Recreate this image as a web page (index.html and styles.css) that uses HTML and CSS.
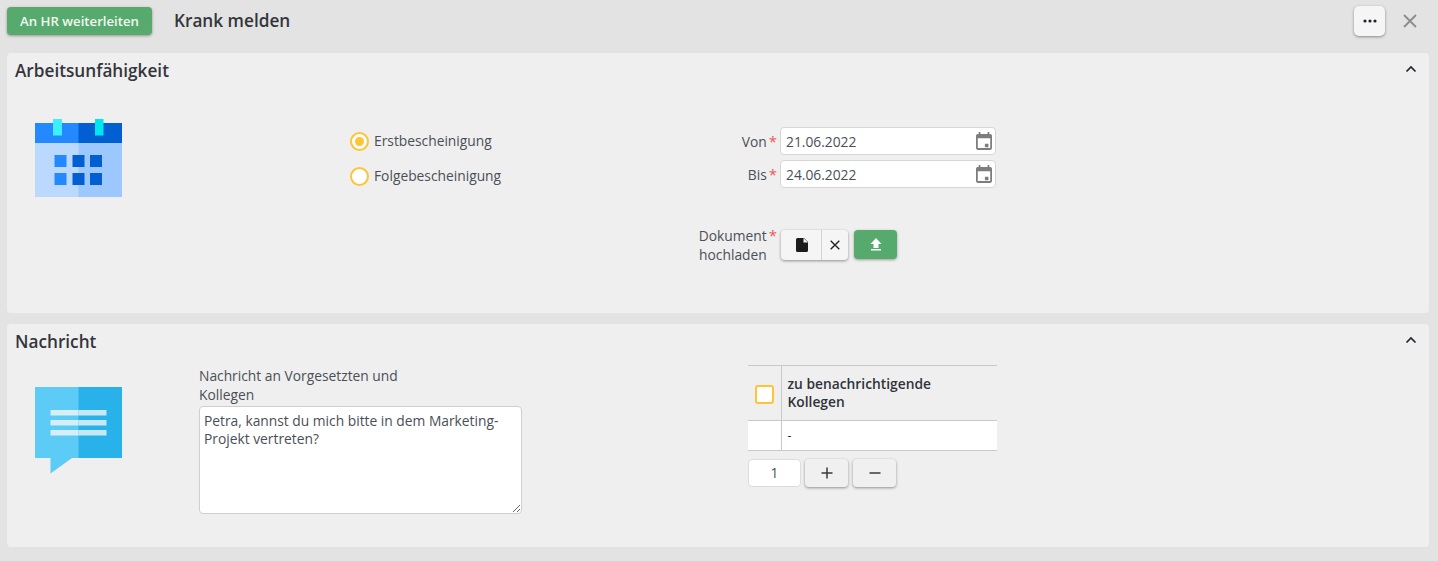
FILE: index.html
```html
<!DOCTYPE html>
<html lang="de">
<head>
<meta charset="utf-8">
<title>Krank melden</title>
<link rel="stylesheet" href="styles.css">
</head>
<body>
<header class="topbar">
  <button class="btn-green btn-forward">An HR weiterleiten</button>
  <h1 class="page-title">Krank melden</h1>
  <button class="btn-more" aria-label="Mehr">
    <svg width="14" height="4" viewBox="0 0 14 4"><circle cx="2" cy="2" r="1.6"/><circle cx="7" cy="2" r="1.6"/><circle cx="12" cy="2" r="1.6"/></svg>
  </button>
  <button class="btn-close" aria-label="Schließen">
    <svg width="14" height="14" viewBox="0 0 14 14"><path d="M1 1l12 12M13 1L1 13"/></svg>
  </button>
</header>

<section class="panel panel-work">
  <div class="panel-head">
    <h2>Arbeitsunfähigkeit</h2>
    <svg class="chevron" width="12" height="8" viewBox="0 0 12 8"><path d="M1.500 6.500L6 2l4.500 4.500"/></svg>
  </div>
  <div class="work-body">
    <svg class="big-icon" width="87" height="78" viewBox="0 0 87 78">
      <rect x="0" y="4" width="44" height="20" fill="#2488ff"/>
      <rect x="43.500" y="4" width="43.500" height="20" fill="#025fd1"/>
      <rect x="0" y="24" width="44" height="54" fill="#bbd9ff"/>
      <rect x="43.500" y="24" width="43.500" height="54" fill="#9cc7ff"/>
      <rect x="18" y="0" width="9" height="16.500" fill="#3ef0ff"/>
      <rect x="60" y="0" width="8.500" height="16.500" fill="#00e7f0"/>
      <rect x="19.500" y="36" width="12" height="12" fill="#2488ff"/>
      <rect x="37.500" y="36" width="12" height="12" fill="#025fd1"/>
      <rect x="55" y="36" width="12" height="12" fill="#025fd1"/>
      <rect x="19.500" y="54" width="12" height="12" fill="#2488ff"/>
      <rect x="37.500" y="54" width="12" height="12" fill="#025fd1"/>
      <rect x="55" y="54" width="12" height="12" fill="#025fd1"/>
    </svg>
    <div class="radios">
      <label class="radio-row"><span class="radio radio-on"></span>Erstbescheinigung</label>
      <label class="radio-row"><span class="radio"></span>Folgebescheinigung</label>
    </div>
    <div class="fields">
      <div class="field-row">
        <span class="field-label">Von<i class="req">*</i></span>
        <div class="date-input">21.06.2022
          <svg class="cal" width="16" height="18" viewBox="3 2 18 20"><path d="M19 4h-1V2h-2v2H8V2H6v2H5a2 2 0 0 0-2 2v14a2 2 0 0 0 2 2h14a2 2 0 0 0 2-2V6a2 2 0 0 0-2-2zm0 16H5V9h14v11zm-6-5h4v4h-4z"/></svg>
        </div>
      </div>
      <div class="field-row">
        <span class="field-label">Bis<i class="req">*</i></span>
        <div class="date-input">24.06.2022
          <svg class="cal" width="16" height="18" viewBox="3 2 18 20"><path d="M19 4h-1V2h-2v2H8V2H6v2H5a2 2 0 0 0-2 2v14a2 2 0 0 0 2 2h14a2 2 0 0 0 2-2V6a2 2 0 0 0-2-2zm0 16H5V9h14v11zm-6-5h4v4h-4z"/></svg>
        </div>
      </div>
      <div class="upload-row">
        <span class="field-label upload-label">Dokument<i class="req">*</i><br>hochladen<i class="req req-hidden">*</i></span>
        <div class="file-group">
          <button class="file-btn file-pick" aria-label="Datei">
            <svg width="12" height="14" viewBox="0 0 12 14"><path d="M1.500 0H8l4 4v8.500A1.500 1.500 0 0 1 10.500 14h-9A1.500 1.500 0 0 1 0 12.500v-11A1.500 1.500 0 0 1 1.500 0z" fill="#1c1c1c"/><path d="M7.500 0v4.500H12" fill="#f5f5f5"/></svg>
          </button>
          <button class="file-btn file-clear" aria-label="Entfernen">
            <svg width="10" height="10" viewBox="0 0 10 10"><path d="M.7.7l8.600 8.600M9.300.7L.7 9.300"/></svg>
          </button>
        </div>
        <button class="btn-green btn-upload" aria-label="Hochladen">
          <svg width="12" height="13" viewBox="0 0 12 13"><path d="M6 0l5.500 6H8.500v4h-5V6H.5z" fill="#fff"/><rect x="1" y="11" width="10" height="1.500" fill="#fff"/></svg>
        </button>
      </div>
    </div>
  </div>
</section>

<section class="panel panel-msg">
  <div class="panel-head">
    <h2>Nachricht</h2>
    <svg class="chevron" width="12" height="8" viewBox="0 0 12 8"><path d="M1.500 6.500L6 2l4.500 4.500"/></svg>
  </div>
  <div class="msg-body">
    <svg class="big-icon chat-icon" width="87" height="87" viewBox="0 0 87 87">
      <path d="M0 0h44v71H37L15.500 86.500V71H0z" fill="#5ccbf5"/>
      <rect x="43.500" width="43.500" height="71" fill="#29b2ea"/>
      <rect x="15.500" y="23" width="28" height="5.500" fill="#d5eef8"/>
      <rect x="43.500" y="23" width="28" height="5.500" fill="#c6e7f4"/>
      <rect x="15.500" y="33" width="28" height="5.500" fill="#d5eef8"/>
      <rect x="43.500" y="33" width="28" height="5.500" fill="#c6e7f4"/>
      <rect x="15.500" y="43" width="28" height="5.500" fill="#d5eef8"/>
      <rect x="43.500" y="43" width="28" height="5.500" fill="#c6e7f4"/>
    </svg>
    <div class="msg-col">
      <label class="msg-label">Nachricht an Vorgesetzten und Kollegen</label>
      <textarea class="msg-text">Petra, kannst du mich bitte in dem Marketing-Projekt vertreten?</textarea>
    </div>
    <div class="colleagues">
      <table class="col-table">
        <thead>
          <tr><th class="check-cell"><span class="checkbox"></span></th><th class="name-cell">zu benachrichtigende Kollegen</th></tr>
        </thead>
        <tbody>
          <tr><td class="check-cell"></td><td class="name-cell">-</td></tr>
        </tbody>
      </table>
      <div class="pager">
        <div class="page-input">1</div>
        <button class="page-btn" aria-label="Plus"><svg width="12" height="12" viewBox="0 0 12 12"><path d="M6 .5v11M.5 6h11"/></svg></button>
        <button class="page-btn" aria-label="Minus"><svg width="12" height="12" viewBox="0 0 12 12"><path d="M.5 6h11"/></svg></button>
      </div>
    </div>
  </div>
</section>
</body>
</html>
```
FILE: styles.css
```css
* { box-sizing: border-box; }
html, body { height: 100%; }
body {
  margin: 0;
  padding: 0 9px 0 7px;
  background: #e3e3e3;
  font-family: "Open Sans", sans-serif;
  font-size: 13.800px;
  line-height: 19px;
  color: #4a4f57;
  overflow: hidden;
}
button { font-family: inherit; padding: 0; cursor: pointer; }
.topbar {
  display: flex;
  align-items: center;
  height: 53px;
  padding-bottom: 11px;
}
.btn-green {
  background: #57aa6e;
  color: #f2f7f2;
  border: 0;
  border-radius: 4px;
  box-shadow: 0 1px 3px rgba(0,0,0,.35);
}
.btn-forward {
  width: 145px;
  height: 28px;
  font-size: 13.200px;
  font-weight: 600;
}
.page-title {
  margin: 0 0 2px 22px;
  font-size: 17.200px;
  font-weight: 600;
  color: #33353b;
  flex: 1;
}
.btn-more {
  width: 31px;
  height: 30px;
  background: #f5f5f5;
  border: 0;
  border-radius: 5px;
  box-shadow: 0 1px 3px rgba(0,0,0,.4);
  display: flex;
  align-items: center;
  justify-content: center;
  fill: #1f2530;
}
.btn-close {
  width: 14px;
  height: 14px;
  margin: 0 12px 0 18px;
  background: none;
  border: 0;
  display: flex;
}
.btn-close path { stroke: #8c8c8c; stroke-width: 1.8; fill: none; }
.panel {
  background: #efefef;
  border-radius: 4px;
}
.panel-work { height: 260px; margin-bottom: 11px; }
.panel-msg { height: 223px; }
.panel-head {
  display: flex;
  align-items: center;
  justify-content: space-between;
  height: 35px;
  padding: 0 12px 1px 8px;
}
.panel-head h2 {
  margin: 0;
  font-size: 17.200px;
  font-weight: 600;
  color: #33353b;
}
.chevron { margin-bottom: 3px; }
.chevron path { fill: none; stroke: #1f2530; stroke-width: 1.7; }
.work-body {
  display: flex;
  align-items: flex-start;
  padding: 31px 0 0 28px;
}
.radios {
  width: 390px;
  margin-left: 228px;
  padding-top: 12px;
  display: flex;
  flex-direction: column;
  gap: 16px;
}
.radio-row { display: flex; align-items: center; height: 19px; gap: 5px; }
.radio {
  width: 19px;
  height: 19px;
  margin-top: 1px;
  border-radius: 50%;
  border: 2px solid #fdc536;
  background: #fff;
  position: relative;
}
.radio-on::after {
  content: "";
  position: absolute;
  inset: 3px;
  border-radius: 50%;
  background: #fdc536;
}
.fields {
  margin-top: 8px;
  margin-left: -53px;
  display: flex;
  flex-direction: column;
  gap: 5px;
}
.field-row { display: flex; align-items: center; gap: 3px; }
.field-label { width: 90px; text-align: right; }
.req { color: #f0545a; font-style: normal; font-size: 15px; margin-left: 2px; line-height: 0; }
.req-hidden { visibility: hidden; }
.date-input {
  position: relative;
  width: 216px;
  height: 28px;
  padding-left: 5px;
  display: flex;
  align-items: center;
  justify-content: space-between;
  background: #fff;
  border: 1px solid #d6d6d6;
  border-radius: 4px;
}
.cal { margin-right: 3px; fill: #7d7d7d; }
.upload-row {
  display: flex;
  align-items: flex-start;
  margin-top: 31px;
}
.upload-label { margin-right: 4px; margin-top: 3px; line-height: 18.500px; }
.file-group {
  display: flex;
  height: 30px;
  margin-top: 6px;
  background: #f5f5f5;
  border-radius: 4px;
  box-shadow: 0 1px 3px rgba(0,0,0,.4);
}
.file-btn {
  height: 30px;
  background: none;
  border: 0;
  display: flex;
  align-items: center;
  justify-content: center;
}
.file-pick { width: 41px; padding-left: 2px; border-right: 1px solid #d2d2d2; }
.file-clear { width: 26px; }
.file-clear path { stroke: #222; stroke-width: 1.4; fill: none; }
.btn-upload {
  width: 43px;
  height: 29px;
  margin: 6px 0 0 6px;
  display: flex;
  align-items: center;
  justify-content: center;
}
.msg-body {
  position: relative;
  display: flex;
  align-items: flex-start;
  padding: 7px 0 0 28px;
}
.chat-icon { margin-top: 20.500px; }
.msg-col { width: 323px; margin-left: 77px; }
.msg-label { display: block; width: 230px; color: #4a4f57; }
.msg-text {
  display: block;
  width: 323px;
  height: 108px;
  margin: 2px 0 0;
  padding: 5px 4px;
  border: 1px solid #cfcfcf;
  border-radius: 4px;
  background: #fff;
  font: inherit;
  line-height: 18px;
  color: #4a4f57;
}
.colleagues { width: 249px; margin: -1px 0 0 226px; }
.col-table {
  width: 249px;
  border-collapse: collapse;
  table-layout: fixed;
}
.col-table th, .col-table td {
  padding: 0 6px;
  border-top: 1px solid #c9c9c9;
  border-bottom: 1px solid #c9c9c9;
  text-align: left;
}
.col-table th { height: 55px; font-weight: 600; color: #2f333a; line-height: 18.500px; }
.col-table td { height: 30px; background: #fff; color: #222; font-size: 12px; }
.col-table .check-cell { width: 33px; border-right: 1px solid #c9c9c9; padding: 0; text-align: center; }
.checkbox {
  display: block;
  width: 19px;
  height: 19px;
  margin: 2px 0 0 7px;
  background: #fff;
  border: 2px solid #fdc536;
  border-radius: 3px;
}
.pager {
  display: flex;
  gap: 4px;
  margin-top: 8px;
}
.page-input {
  width: 53px;
  height: 28px;
  background: #fff;
  border: 1px solid #dcdcdc;
  border-radius: 4px;
  text-align: center;
  line-height: 26px;
}
.page-btn {
  width: 43px;
  height: 28px;
  background: #f0f0f0;
  border: 0;
  border-radius: 4px;
  box-shadow: 0 1px 3px rgba(0,0,0,.4);
  display: flex;
  align-items: center;
  justify-content: center;
}
.page-btn + .page-btn { margin-left: 1px; }
.page-btn path { stroke: #3a3a3a; stroke-width: 1.5; fill: none; }
```
